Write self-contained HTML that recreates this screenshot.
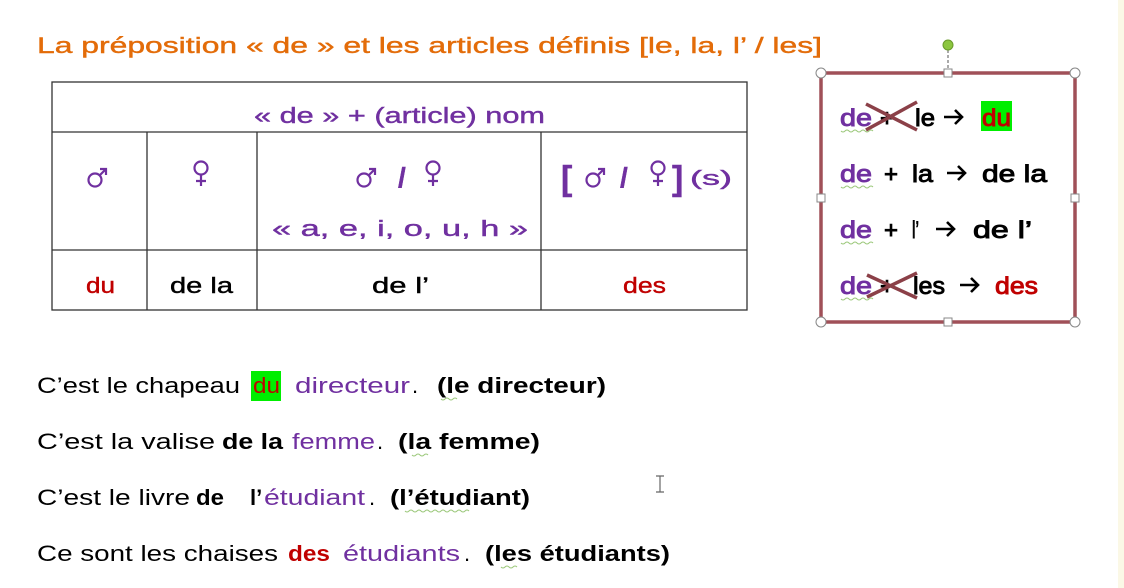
<!DOCTYPE html>
<html><head><meta charset="utf-8"><style>html,body{margin:0;padding:0;background:#fff}svg{display:block}</style></head>
<body>
<svg width="1124" height="588" viewBox="0 0 1124 588" xmlns="http://www.w3.org/2000/svg" font-family="'Liberation Sans', sans-serif">
<defs>
<g id="mars" fill="none" stroke="#7030a0" stroke-width="2.2"><circle cx="0" cy="0" r="6.5"/><path d="M5 -5 L11 -11 M5 -11 H11 V-5"/></g>
<g id="venus" fill="none" stroke="#7030a0" stroke-width="2.2"><circle cx="0" cy="0" r="6.5"/><path d="M0 6.5 V18 M-5 13 H5"/></g>
<path id="arr" d="M0 0 H18 M11 -7 L18 0 L11 7" fill="none" stroke="#000" stroke-width="2.6"/>
</defs>
<rect x="0" y="0" width="1124" height="588" fill="#fff"/>
<rect x="1118" y="0" width="6" height="588" fill="#fbf8e6"/>
<text x="37" y="53" font-size="22" fill="#e36c09" stroke="#e36c09" stroke-width="0.4" textLength="785" lengthAdjust="spacingAndGlyphs">La préposition « de » et les articles définis [le, la, l’ / les]</text>
<g stroke="#333" stroke-width="1.3" fill="none">
<rect x="52" y="82" width="695" height="228"/>
<line x1="52" y1="132" x2="747" y2="132"/>
<line x1="52" y1="250" x2="747" y2="250"/>
<line x1="147" y1="132" x2="147" y2="310"/>
<line x1="257" y1="132" x2="257" y2="310"/>
<line x1="541" y1="132" x2="541" y2="310"/>
</g>
<use href="#mars" x="95" y="180"/>
<use href="#venus" x="201" y="168"/>
<use href="#mars" x="364" y="180"/>
<use href="#venus" x="433" y="168"/>
<use href="#mars" x="593" y="180"/>
<use href="#venus" x="658" y="168"/>
<g fill="#7030a0" stroke="#7030a0" stroke-width="0.4">
<text x="254" y="123" font-size="22" textLength="291" lengthAdjust="spacingAndGlyphs">« de » + (article) nom</text>
<text x="398" y="187" font-size="28" font-weight="bold">/</text>
<text x="620" y="187" font-size="28" font-weight="bold">/</text>
<text x="561" y="190" font-size="34" font-weight="bold">[</text>
<text x="672" y="190" font-size="34" font-weight="bold">]</text>
<text x="690" y="185" font-size="20" textLength="42" lengthAdjust="spacingAndGlyphs">(s)</text>
<text x="272" y="236" font-size="22" textLength="256" lengthAdjust="spacingAndGlyphs">« a, e, i, o, u, h »</text>
</g>
<g font-size="22" stroke-width="0.4">
<text x="86" y="293" fill="#c00000" stroke="#c00000" textLength="29" lengthAdjust="spacingAndGlyphs">du</text>
<text x="170" y="293" fill="#000" stroke="#000" textLength="63" lengthAdjust="spacingAndGlyphs">de la</text>
<text x="372" y="293" fill="#000" stroke="#000" textLength="57" lengthAdjust="spacingAndGlyphs">de l’</text>
<text x="623" y="293" fill="#c00000" stroke="#c00000" textLength="43" lengthAdjust="spacingAndGlyphs">des</text>
</g>
<!-- box -->
<line x1="948" y1="50" x2="948" y2="72" stroke="#555" stroke-dasharray="3,2"/>
<circle cx="948" cy="45" r="5" fill="#8cc63f" stroke="#6a9a2a"/>
<rect x="821" y="73" width="254" height="249" fill="#fff" stroke="#a05058" stroke-width="3.5"/>
<rect x="981" y="101" width="31" height="30" fill="#00ee00"/>
<g font-size="24" stroke-width="0.9">
<text x="840" y="126" fill="#7030a0" stroke="#7030a0" textLength="32" lengthAdjust="spacingAndGlyphs">de</text>
<text x="880" y="126" fill="#000" stroke="#000">+</text>
<text x="915" y="126" fill="#000" stroke="#000" textLength="20" lengthAdjust="spacingAndGlyphs">le</text>
<text x="982" y="126" fill="#c00000" stroke="#c00000" textLength="29" lengthAdjust="spacingAndGlyphs">du</text>
<text x="840" y="182" fill="#7030a0" stroke="#7030a0" textLength="32" lengthAdjust="spacingAndGlyphs">de</text>
<text x="884" y="182" fill="#000" stroke="#000">+</text>
<text x="912" y="182" fill="#000" stroke="#000" textLength="21" lengthAdjust="spacingAndGlyphs">la</text>
<text x="982" y="182" fill="#000" stroke="#000" textLength="65" lengthAdjust="spacingAndGlyphs">de la</text>
<text x="840" y="238" fill="#7030a0" stroke="#7030a0" textLength="32" lengthAdjust="spacingAndGlyphs">de</text>
<text x="884" y="238" fill="#000" stroke="#000">+</text>
<text x="912" y="238" fill="#000" stroke="#000" textLength="7" lengthAdjust="spacingAndGlyphs">l’</text>
<text x="973" y="238" fill="#000" stroke="#000" textLength="59" lengthAdjust="spacingAndGlyphs">de l’</text>
<text x="840" y="294" fill="#7030a0" stroke="#7030a0" textLength="32" lengthAdjust="spacingAndGlyphs">de</text>
<text x="880" y="294" fill="#000" stroke="#000">+</text>
<text x="913" y="294" fill="#000" stroke="#000" textLength="32" lengthAdjust="spacingAndGlyphs">les</text>
<text x="995" y="294" fill="#c00000" stroke="#c00000" textLength="43" lengthAdjust="spacingAndGlyphs">des</text>
</g>
<use href="#arr" x="944" y="117"/>
<use href="#arr" x="947" y="173"/>
<use href="#arr" x="936" y="229"/>
<use href="#arr" x="960" y="285"/>
<g stroke="#8b4048" stroke-width="3.5">
<line x1="866" y1="104" x2="917" y2="130"/><line x1="866" y1="130" x2="917" y2="102"/>
<line x1="867" y1="297" x2="917" y2="273"/><line x1="867" y1="275" x2="917" y2="298"/>
</g>
<g stroke="#9bc87a" stroke-width="1" fill="none">
<path d="M841 131 q2 2 4 0 t4 0 t4 0 t4 0 t4 0 t4 0 t4 0 t4 0"/>
<path d="M841 187 q2 2 4 0 t4 0 t4 0 t4 0 t4 0 t4 0 t4 0 t4 0"/>
<path d="M841 243 q2 2 4 0 t4 0 t4 0 t4 0 t4 0 t4 0 t4 0 t4 0"/>
<path d="M841 299 q2 2 4 0 t4 0 t4 0 t4 0 t4 0 t4 0 t4 0 t4 0"/>
</g>
<g fill="#fff" stroke="#888" stroke-width="1">
<circle cx="821" cy="73" r="5"/><circle cx="1075" cy="73" r="5"/><circle cx="821" cy="322" r="5"/><circle cx="1075" cy="322" r="5"/>
<rect x="944" y="69" width="8" height="8"/><rect x="944" y="318" width="8" height="8"/>
<rect x="817" y="194" width="8" height="8"/><rect x="1071" y="194" width="8" height="8"/>
</g>
<!-- sentences -->
<rect x="251" y="371" width="30" height="30" fill="#00ee00"/>
<g font-size="22">
<text x="37" y="393" fill="#000" textLength="203" lengthAdjust="spacingAndGlyphs">C’est le chapeau</text>
<text x="253" y="393" fill="#c00000" textLength="27" lengthAdjust="spacingAndGlyphs">du</text>
<text x="295" y="393" fill="#7030a0" textLength="115" lengthAdjust="spacingAndGlyphs">directeur</text>
<text x="412" y="393" fill="#000">.</text>
<text x="437" y="393" fill="#000" font-weight="bold" textLength="169" lengthAdjust="spacingAndGlyphs">(le directeur)</text>

<text x="37" y="449" fill="#000" textLength="178" lengthAdjust="spacingAndGlyphs">C’est la valise</text>
<text x="222" y="449" fill="#000" font-weight="bold" textLength="61" lengthAdjust="spacingAndGlyphs">de la</text>
<text x="292" y="449" fill="#7030a0" textLength="83" lengthAdjust="spacingAndGlyphs">femme</text>
<text x="377" y="449" fill="#000">.</text>
<text x="398" y="449" fill="#000" font-weight="bold" textLength="142" lengthAdjust="spacingAndGlyphs">(la femme)</text>

<text x="37" y="505" fill="#000" textLength="153" lengthAdjust="spacingAndGlyphs">C’est le livre</text>
<text x="196" y="505" fill="#000" font-weight="bold" textLength="28" lengthAdjust="spacingAndGlyphs">de</text>
<text x="250" y="505" fill="#000" font-weight="bold">l’</text>
<text x="264" y="505" fill="#7030a0" textLength="101" lengthAdjust="spacingAndGlyphs">étudiant</text>
<text x="369" y="505" fill="#000">.</text>
<text x="390" y="505" fill="#000" font-weight="bold" textLength="140" lengthAdjust="spacingAndGlyphs">(l’étudiant)</text>

<text x="37" y="561" fill="#000" textLength="241" lengthAdjust="spacingAndGlyphs">Ce sont les chaises</text>
<text x="288" y="561" fill="#c00000" font-weight="bold" textLength="42" lengthAdjust="spacingAndGlyphs">des</text>
<text x="343" y="561" fill="#7030a0" textLength="117" lengthAdjust="spacingAndGlyphs">étudiants</text>
<text x="464" y="561" fill="#000">.</text>
<text x="485" y="561" fill="#000" font-weight="bold" textLength="185" lengthAdjust="spacingAndGlyphs">(les étudiants)</text>
</g>
<g stroke="#9bc87a" stroke-width="1" fill="none">
<path d="M441 399 q2 2 4 0 t4 0 t4 0 t4 0"/>
<path d="M412 455 q2 2 4 0 t4 0 t4 0 t4 0"/>
<path d="M405 511 q2 2 4 0 t4 0 t4 0 t4 0 t4 0 t4 0 t4 0 t4 0 t4 0 t4 0 t4 0 t4 0 t4 0 t4 0 t4 0 t4 0"/>
<path d="M501 567 q2 2 4 0 t4 0 t4 0 t4 0"/>
</g>
<path d="M656 476 h8 M660 476 v16 M656 492 h8" stroke="#666" stroke-width="1.2" fill="none"/>
</svg>
</body></html>
